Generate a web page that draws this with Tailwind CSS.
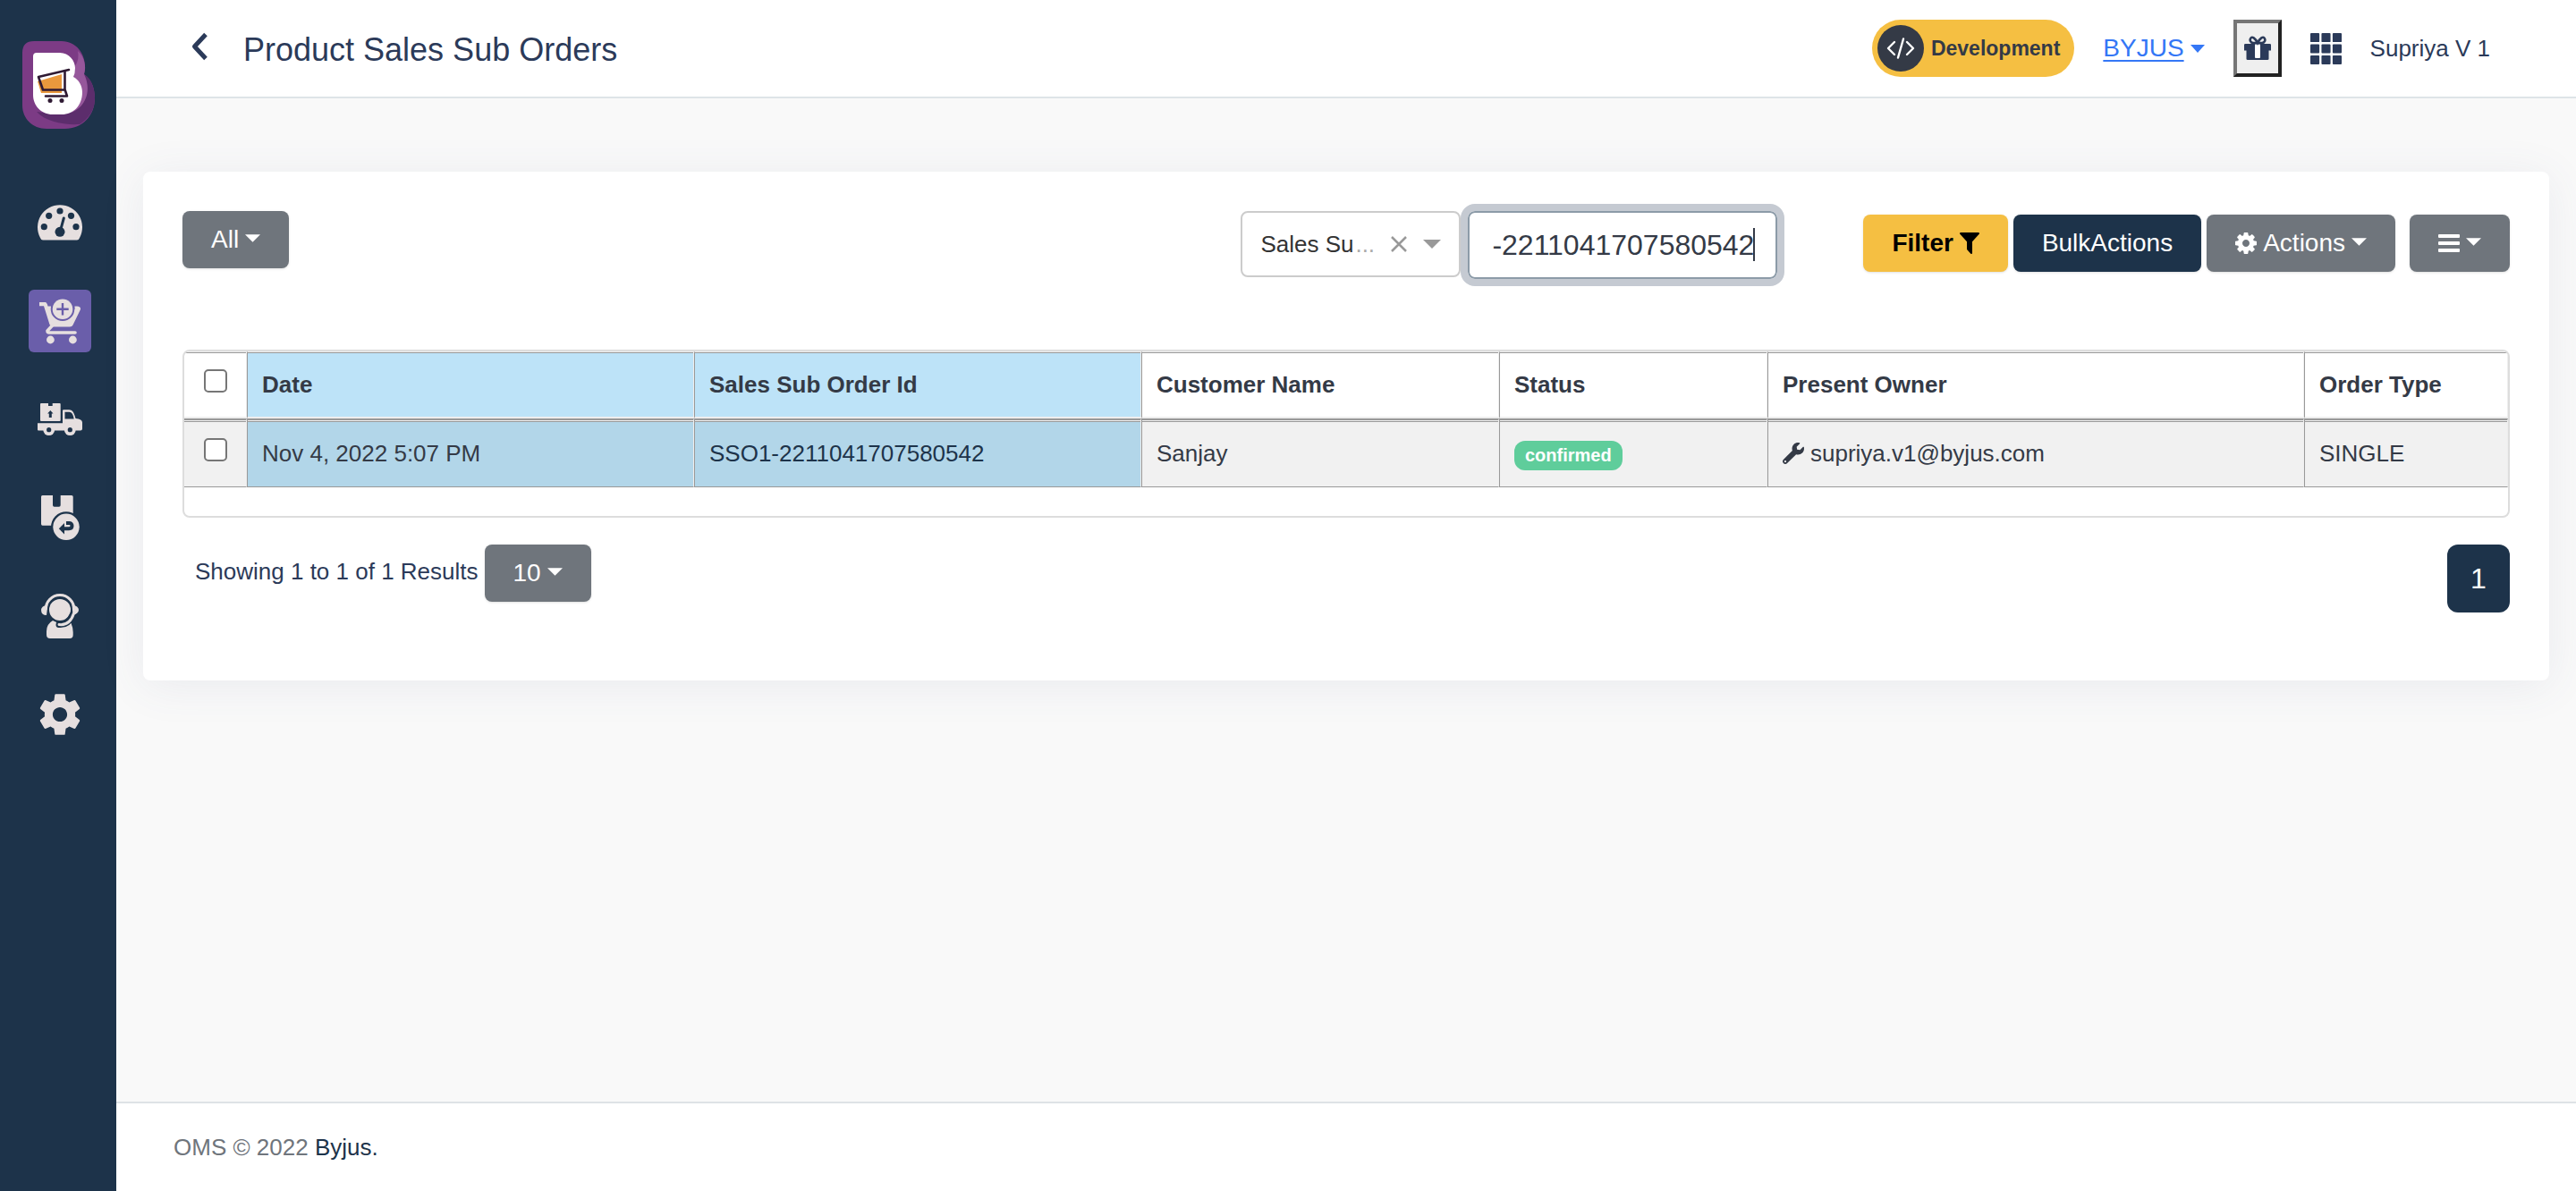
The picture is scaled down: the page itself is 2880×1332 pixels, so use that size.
<!DOCTYPE html>
<html lang="en">
<head>
<meta charset="utf-8">
<title>Product Sales Sub Orders</title>
<script src="https://cdn.jsdelivr.net/npm/@tailwindcss/browser@4"></script>
</head>
<body class="flex min-h-screen bg-[#f9f9f9] font-['Liberation_Sans',Arial,sans-serif] text-[26px] leading-[32px] text-[#343a46]">

<!-- Sidebar -->
<aside class="flex w-[130px] shrink-0 flex-col bg-[#1d334a] pt-[46px] text-[#e6dfdf]">
  <a href="#" aria-label="Home" class="ml-[25px]">
    <svg class="h-[98px] w-[81px]" viewBox="0 0 81 98">
      <path fill="#7c3b85" d="M13 0H44C60 0 70 14 70 28L69 37C78 43 81 54 81 64C81 84 66 98 48 98H27C11 98 0 86 0 72V13Q0 0 13 0Z"/>
      <path fill="#5c2d6c" d="M69 37C78 43 81 54 81 64C81 77 74 87 64 93C46 94 26 90 16 79L40 82L60 74Z"/>
      <path fill="#96579b" d="M62 11C69 17 72 28 69 37C77 53 73 72 55 80L66 60L57 40L59 28Q64 20 62 11Z"/>
      <path fill="#fff" d="M16 13H42C52 13 59 22 59 30Q59 36 57 40C63 43 67 50 67 57C67 72 57 82 44 82H34C21 82 12 72 12 60V17Q12 13 16 13Z"/>
      <path fill="#e9983d" d="M17 45L44 37V58H21Z"/>
      <g fill="none" stroke="#2f1a33" stroke-width="2.6" stroke-linecap="round" stroke-linejoin="round"><path d="M52 32L18 40L23 54.500H47"/><path d="M47.500 34V54L50 61.500H26"/></g>
      <circle cx="31" cy="66.500" r="2.500" fill="#2f1a33"/><circle cx="44" cy="66.500" r="2.500" fill="#2f1a33"/>
    </svg>
  </a>
  <nav class="ml-8 mt-[70px] flex w-[70px] flex-col gap-10">
    <a href="#" aria-label="Dashboard" class="flex h-[70px] items-center justify-center">
      <svg class="size-[50px]" viewBox="0 0 50 50"><path fill="currentColor" d="M6 44.500Q4 44.500 3 42A25 25 0 1 1 47 42Q46 44.500 44 44.500Z"/><g fill="#1d334a"><circle cx="7.300" cy="29.600" r="3.600"/><circle cx="12.700" cy="17.300" r="3.600"/><circle cx="25" cy="12" r="3.600"/><circle cx="37.500" cy="17.300" r="3.600"/><circle cx="43" cy="29.600" r="3.600"/><circle cx="25" cy="35.300" r="5.500"/></g><path stroke="#1d334a" stroke-width="3" stroke-linecap="round" d="M25.500 34L29.300 20"/></svg>
    </a>
    <a href="#" aria-label="Orders" class="flex h-[70px] items-center justify-center rounded-md bg-[#6a5eaa]">
      <svg class="size-[70px]" viewBox="0 0 70 70"><path fill="currentColor" d="M12 14H18.500Q20.500 14 21.500 18.500H54Q58.500 18.500 58 22L49.500 39.500Q48.500 41.500 46 41.500H26L23.500 39L17 18.300H12Z"/><path fill="none" stroke="currentColor" stroke-width="3.600" stroke-linecap="round" stroke-linejoin="round" d="M26.500 40L21 46Q21 48 23 48H52"/><path fill="#6a5eaa" d="M25 16H51.500V22H25Z"/><circle cx="38" cy="21.700" r="13.300" fill="#6a5eaa"/><circle cx="38" cy="21.700" r="11.300" fill="currentColor"/><path stroke="#6a5eaa" stroke-width="2.400" d="M38 15V28.400M31.300 21.700H44.700"/><circle cx="24.400" cy="56" r="4.400" fill="currentColor"/><circle cx="49.400" cy="56" r="4.400" fill="currentColor"/></svg>
    </a>
    <a href="#" aria-label="Shipments" class="flex h-[70px] items-center justify-center">
      <svg class="size-[50px]" viewBox="0 0 50 50"><g fill="currentColor"><path d="M4 7H12V10H16.700V7H24.700Q25.700 7 25.700 8V26Q25.700 27 24.700 27H4Q3 27 3 26V8Q3 7 4 7Z"/><path fill-rule="evenodd" d="M0 29.300H28V15.300Q28 14.300 29 14.300H35C40 14.300 41 19 42.500 24Q50 24.500 50 28.500V35.500Q50 37.500 48 37.500H1Q0 37.500 0 36.500ZM30.500 16.700V24.500H40.700Q39.500 17 35.500 16.700Z"/><circle cx="12.700" cy="36.700" r="6.400"/><circle cx="36.300" cy="36.700" r="6.400"/></g><g fill="#1d334a"><circle cx="12.700" cy="36.700" r="2.600"/><circle cx="36.300" cy="36.700" r="2.600"/><path d="M14.300 15L17.500 18.500H15.800V23H12.800V18.500H11.100Z"/></g></svg>
    </a>
    <a href="#" aria-label="Returns" class="flex h-[70px] items-center justify-center">
      <svg class="size-[50px]" viewBox="0 0 50 50"><path fill="currentColor" d="M5.500 0H17V11Q17 12.700 18.700 12.700H24Q25.700 12.700 25.700 11V0H38Q39.700 0 39.700 1.500V33.700H5.500Q4 33.700 4 32V1.500Q4 0 5.500 0Z"/><circle cx="32" cy="35.300" r="17" fill="#1d334a"/><circle cx="32" cy="35.300" r="14.700" fill="currentColor"/><path fill="none" stroke="#1d334a" stroke-width="4" d="M28 37.200H35Q38.500 37.200 38.500 34T35 31H32"/><path fill="#1d334a" d="M23.800 37.200L30 31V43.500Z"/></svg>
    </a>
    <a href="#" aria-label="Support" class="flex h-[70px] items-center justify-center">
      <svg class="size-[50px]" viewBox="0 0 50 50"><g fill="currentColor"><circle cx="25" cy="18" r="12"/><path d="M17 30Q25 35 32 32L37.500 33Q39.700 38 39.700 43V46Q39.700 50 36 50H14Q10 50 10 46V42Q10 34 17 30Z"/></g><path fill="none" stroke="#1d334a" stroke-width="7" stroke-linecap="round" d="M39 24Q34 35.500 24 34.500"/><g fill="none" stroke="currentColor"><path stroke-width="3" d="M9 18A16 16.500 0 0 1 41 18"/><path stroke-width="3" stroke-linecap="round" d="M40.500 22Q36 36 24 34.500"/></g><path fill="currentColor" d="M11.500 12L10 24Q4 24 4 18Q4 14 11.500 12ZM38.500 12L39.500 24Q46 22 46 18Q46 14 38.500 12Z"/></svg>
    </a>
    <a href="#" aria-label="Settings" class="flex h-[70px] items-center justify-center">
      <svg class="size-[50px]" viewBox="1.500 1.500 21 21" fill="currentColor"><path d="M19.140 12.940c.04-.3.060-.61.060-.94 0-.32-.02-.64-.07-.94l2.030-1.580c.18-.14.230-.41.120-.61l-1.920-3.320c-.12-.22-.37-.29-.59-.22l-2.390.96c-.5-.38-1.030-.7-1.620-.94l-.36-2.540c-.04-.24-.24-.41-.48-.41h-3.840c-.24 0-.43.170-.47.410l-.36 2.540c-.59.240-1.130.570-1.620.940l-2.390-.96c-.22-.08-.47 0-.59.220L2.740 8.870c-.12.210-.08.470.120.610l2.030 1.580c-.05.300-.09.630-.09.940s.02.640.070.940l-2.030 1.580c-.18.140-.23.410-.12.610l1.920 3.320c.12.220.370.290.590.220l2.390-.96c.5.380 1.030.7 1.620.940l.36 2.540c.05.240.240.410.480.410h3.840c.24 0 .44-.17.470-.41l.36-2.540c.59-.24 1.130-.56 1.620-.94l2.390.96c.22.080.47 0 .59-.22l1.920-3.320c.12-.22.070-.47-.12-.61l-2.010-1.580zM12 15.400c-1.880 0-3.400-1.520-3.400-3.400s1.520-3.400 3.400-3.400 3.400 1.520 3.400 3.400-1.520 3.400-3.400 3.400z"/></svg>
    </a>
  </nav>
</aside>

<div class="flex min-w-0 flex-1 flex-col">
  <!-- Top bar -->
  <header class="flex h-[110px] items-center border-b-2 border-[#dee4e8] bg-white pl-[83px] pr-24 text-[#2b3a59]">
    <button type="button" aria-label="Back" class="mr-[39px] pb-1">
      <svg class="h-8 w-5" viewBox="0 0 20 32" fill="none" stroke="currentColor" stroke-width="5" stroke-linejoin="round"><path d="M17 2.500L4.500 16L17 29.500"/></svg>
    </button>
    <h1 class="pt-1 text-[36px] leading-[44px]">Product Sales Sub Orders</h1>
    <div class="ml-auto flex items-center gap-8">
      <div class="flex h-16 items-center gap-2 rounded-full bg-[#f5bf42] pl-[6px] pr-4 text-[23px] font-bold text-[#343a46]">
        <span class="flex size-[52px] items-center justify-center rounded-full bg-[#343a46]">
          <svg class="h-6 w-8" viewBox="0 0 32 24" fill="none" stroke="#fff" stroke-width="2.400" stroke-linecap="round" stroke-linejoin="round"><path d="M9 5L2 12L9 19M23 5L30 12L23 19M19 1.500L13 22.500"/></svg>
        </span>
        Development
      </div>
      <a href="#" class="flex items-center gap-[7px] text-[28px] text-[#3477f6]"><span class="underline decoration-2 underline-offset-4">BYJUS</span>
        <svg class="h-[9px] w-4" viewBox="0 0 16 9" fill="currentColor"><path d="M0 0H16L8 9Z"/></svg></a>
      <button type="button" aria-label="Gifts" class="flex h-16 w-[54px] items-center justify-center border-4 border-b-[#222] border-l-[#767676] border-r-[#222] border-t-[#767676] bg-[#efefef]">
        <svg class="h-[28px] w-[30px]" viewBox="0 0 30 28"><path fill="currentColor" d="M1.500 9H28.500Q30 9 30 10V16.500H27.500V26Q27.500 27 26 27H4Q2.500 27 2.500 26V16.500H0V10Q0 9 1.500 9Z"/><path fill="#fff" d="M12 9.500H18V24Q18 25 17 25H13Q12 25 12 24Z"/><path fill="none" stroke="currentColor" stroke-width="2.600" d="M15 8C12 2 9 .800 7.500 2.500C5.500 5 7.500 8 10 8H20C22.500 8 24.500 5 22.500 2.500C21 .800 18 2 15 8Z"/></svg>
      </button>
      <button type="button" aria-label="Apps">
        <svg class="block size-[35px]" viewBox="0 0 36 36" fill="currentColor"><rect width="10.400" height="10.400" rx="1"/><rect x="12.800" width="10.400" height="10.400" rx="1"/><rect x="25.600" width="10.400" height="10.400" rx="1"/><rect y="12.800" width="10.400" height="10.400" rx="1"/><rect x="12.800" y="12.800" width="10.400" height="10.400" rx="1"/><rect x="25.600" y="12.800" width="10.400" height="10.400" rx="1"/><rect y="25.600" width="10.400" height="10.400" rx="1"/><rect x="12.800" y="25.600" width="10.400" height="10.400" rx="1"/><rect x="25.600" y="25.600" width="10.400" height="10.400" rx="1"/></svg>
      </button>
      <span>Supriya V 1</span>
    </div>
  </header>

  <main class="flex-1 px-[30px] pt-[82px]">
    <section class="rounded-lg bg-white p-11 pb-[76px] shadow-[0_6px_50px_rgba(82,92,130,0.09)]">
      <!-- Toolbar -->
      <div class="flex items-start">
        <button type="button" class="flex h-16 items-center gap-[7px] rounded-lg bg-[#6f757c] px-8 text-[28px] text-white shadow-sm">All
          <svg class="mb-1 h-[9px] w-[17px]" viewBox="0 0 16 8" fill="currentColor"><path d="M0 0H16L8 8Z"/></svg></button>

        <div class="ml-auto flex h-[74px] w-[246px] items-center rounded-lg border-2 border-[#ccc] pl-5 text-[#333]">
          <select aria-label="Search field" class="w-[106px] appearance-none bg-transparent"><option>Sales Su</option></select>
          <span class="text-[#aaa]">...</span>
          <button type="button" aria-label="Clear" class="ml-[18px] text-[#999]"><svg class="block size-[18px]" viewBox="0 0 18 18" fill="none" stroke="currentColor" stroke-width="2.500"><path d="M1 1L17 17M17 1L1 17"/></svg></button>
          <svg class="ml-[18px] h-[10px] w-5 text-[#999]" viewBox="0 0 20 10" fill="currentColor"><path d="M0 0H20L10 10Z"/></svg>
        </div>
        <div class="relative ml-2">
          <input type="text" aria-label="Search value" value="-2211041707580542" class="block h-[76px] w-[346px] rounded-lg border-2 border-[#8c9ba8] px-6 text-right text-[32px] leading-[40px] text-[#343a46] outline-8 outline-[#c5cad2]">
          <span class="absolute right-[25px] top-[19px] h-[37px] w-[2px] bg-[#343a46]"></span>
        </div>

        <div class="ml-24 mt-1 flex gap-[6px] text-[28px] text-white">
          <button type="button" class="flex h-16 items-center gap-[7px] rounded-lg bg-[#f5bf42] px-8 font-bold text-black shadow-sm">Filter
            <svg class="h-6 w-[22px]" viewBox="192 256 1408 1408" preserveAspectRatio="none" fill="currentColor"><path d="M1595 295q17 41-14 70l-493 493v742q0 42-39 59-13 5-25 5-27 0-45-19l-256-256q-19-19-19-45v-486l-493-493q-31-29-14-70 17-39 59-39h1280q42 0 59 39z"/></svg></button>
          <button type="button" class="h-16 rounded-lg bg-[#1d334a] px-8 shadow-sm">BulkActions</button>
          <button type="button" class="flex h-16 items-center gap-[7px] rounded-lg bg-[#6f757c] px-8 shadow-sm">
            <svg class="size-6" viewBox="128 128 1536 1536" fill="currentColor"><path d="M1152 896q0-106-75-181t-181-75-181 75-75 181 75 181 181 75 181-75 75-181zm512-109v222q0 12-8 23t-20 13l-185 28q-19 54-39 91 35 50 107 138 10 12 10 25t-9 23q-27 37-99 108t-94 71q-12 0-26-9l-138-108q-44 23-91 38-16 136-29 186-7 28-36 28h-222q-14 0-24.500-8.500t-11.500-21.500l-28-184q-49-16-90-37l-141 107q-10 9-25 9-14 0-25-11-126-114-165-168-7-10-7-23 0-12 8-23 15-21 51-66.500t54-70.500q-27-50-41-99l-183-27q-13-2-21-12.500t-8-23.500v-222q0-12 8-23t19-13l186-28q14-46 39-92-40-57-107-138-10-12-10-24 0-10 9-23 26-36 98.500-107.500t94.500-71.500q13 0 26 10l138 107q44-23 91-38 16-136 29-186 7-28 36-28h222q14 0 24.500 8.500t11.500 21.500l28 184q49 16 90 37l142-107q9-9 24-9 13 0 25 10 129 119 165 170 7 8 7 22 0 12-8 23-15 21-51 66.500t-54 70.500q26 50 41 98l183 28q13 2 21 12.500t8 23.500z"/></svg>
            Actions
            <svg class="mb-1 h-[9px] w-[17px]" viewBox="0 0 16 8" fill="currentColor"><path d="M0 0H16L8 8Z"/></svg></button>
          <button type="button" aria-label="Columns" class="ml-[10px] flex h-16 items-center gap-[7px] rounded-lg bg-[#6f757c] px-8 shadow-sm">
            <svg class="h-5 w-6" viewBox="0 0 24 20" fill="currentColor"><rect width="24" height="4" rx="1"/><rect y="8" width="24" height="4" rx="1"/><rect y="16" width="24" height="4" rx="1"/></svg>
            <svg class="mb-1 h-[9px] w-[17px]" viewBox="0 0 16 8" fill="currentColor"><path d="M0 0H16L8 8Z"/></svg></button>
        </div>
      </div>

      <!-- Orders table -->
      <div class="mt-[79px] overflow-hidden rounded-lg border-2 border-[#ddd] pb-8">
        <table class="w-full table-fixed border-separate border-spacing-0 text-left">
          <colgroup><col class="w-[70px]"><col class="w-[500px]"><col class="w-[500px]"><col class="w-[400px]"><col class="w-[300px]"><col class="w-[600px]"><col></colgroup>
          <thead>
            <tr class="h-[75px] *:border-t *:border-r *:border-b-2 *:border-[#eee] *:shadow-[inset_0_1px_#999]">
              <th class="pb-2 text-center"><input type="checkbox" aria-label="Select all" class="block mx-auto size-[26px] appearance-none rounded-[5px] border-2 border-[#767676] bg-white"></th>
              <th class="border-l border-l-[#999]! bg-[#bde3f8] px-4">Date</th>
              <th class="border-l border-l-[#999]! bg-[#bde3f8] px-4">Sales Sub Order Id</th>
              <th class="border-l border-l-[#999]! px-4">Customer Name</th>
              <th class="border-l border-l-[#999]! px-4">Status</th>
              <th class="border-l border-l-[#999]! px-4">Present Owner</th>
              <th class="border-l border-l-[#999]! px-4">Order Type</th>
            </tr>
          </thead>
          <tbody>
            <tr class="h-[77px] bg-[#f1f1f1] *:border-t-2 *:border-r *:border-b *:border-t-[#999] *:border-r-[#eee] *:border-b-[#999] *:shadow-[inset_0_1px_#eee,inset_0_2px_#999]">
              <td class="pb-2"><input type="checkbox" aria-label="Select order" class="block mx-auto size-[26px] appearance-none rounded-[5px] border-2 border-[#767676] bg-white"></td>
              <td class="border-l border-l-[#999] bg-[#b2d6e9] px-4">Nov 4, 2022 5:07 PM</td>
              <td class="border-l border-l-[#999] bg-[#b2d6e9] px-4"><a href="#" class="text-[#1d334a]">SSO1-2211041707580542</a></td>
              <td class="border-l border-l-[#999] px-4">Sanjay</td>
              <td class="border-l border-l-[#999] px-4"><span class="mt-1 flex h-[33px] w-fit items-center rounded-xl bg-[#5fcd9b] px-3 text-[20px] font-bold text-white">confirmed</span></td>
              <td class="border-l border-l-[#999] px-4"><span class="flex items-center gap-[7px]"><svg class="size-6" viewBox="0 0 512 512" fill="currentColor"><path d="M507.730 109.100c-2.240-9.030-13.540-12.090-20.120-5.510l-74.360 74.360-67.880-11.310-11.310-67.880 74.360-74.360c6.620-6.620 3.430-17.900-5.660-20.160-47.380-11.740-99.550.910-136.580 37.930-39.640 39.640-50.550 97.100-34.050 147.200L18.740 402.760c-24.990 24.990-24.990 65.510 0 90.500 24.990 24.990 65.510 24.990 90.500 0l213.210-213.210c50.120 16.710 107.470 5.680 147.370-34.220 37.070-37.070 49.700-89.320 37.910-136.730zM64 472c-13.250 0-24-10.750-24-24 0-13.260 10.750-24 24-24s24 10.740 24 24c0 13.250-10.750 24-24 24z"/></svg>supriya.v1@byjus.com</span></td>
              <td class="border-l border-l-[#999] px-4">SINGLE</td>
            </tr>
          </tbody>
        </table>
      </div>

      <!-- Pagination -->
      <div class="mt-[30px] flex items-start">
        <span class="pl-[14px] leading-[60px] text-[#2b3a59]">Showing 1 to 1 of 1 Results</span>
        <button type="button" aria-label="Rows per page: 10" class="ml-[7px] flex h-16 items-center gap-[7px] rounded-lg bg-[#6f757c] px-8 text-[28px] text-white shadow-sm">10
          <svg class="mb-1 h-[9px] w-[17px]" viewBox="0 0 16 8" fill="currentColor"><path d="M0 0H16L8 8Z"/></svg></button>
        <button type="button" class="ml-auto h-[76px] w-[70px] rounded-xl bg-[#1d334a] text-[32px] text-white">1</button>
      </div>
    </section>
  </main>

  <footer class="flex h-[100px] items-center border-t-2 border-[#dee2e6] bg-white pl-16 text-[#6f757c]">
    <p>OMS © 2022 <a href="#" class="text-[#1d334a]">Byjus.</a></p>
  </footer>
</div>
</body>
</html>
